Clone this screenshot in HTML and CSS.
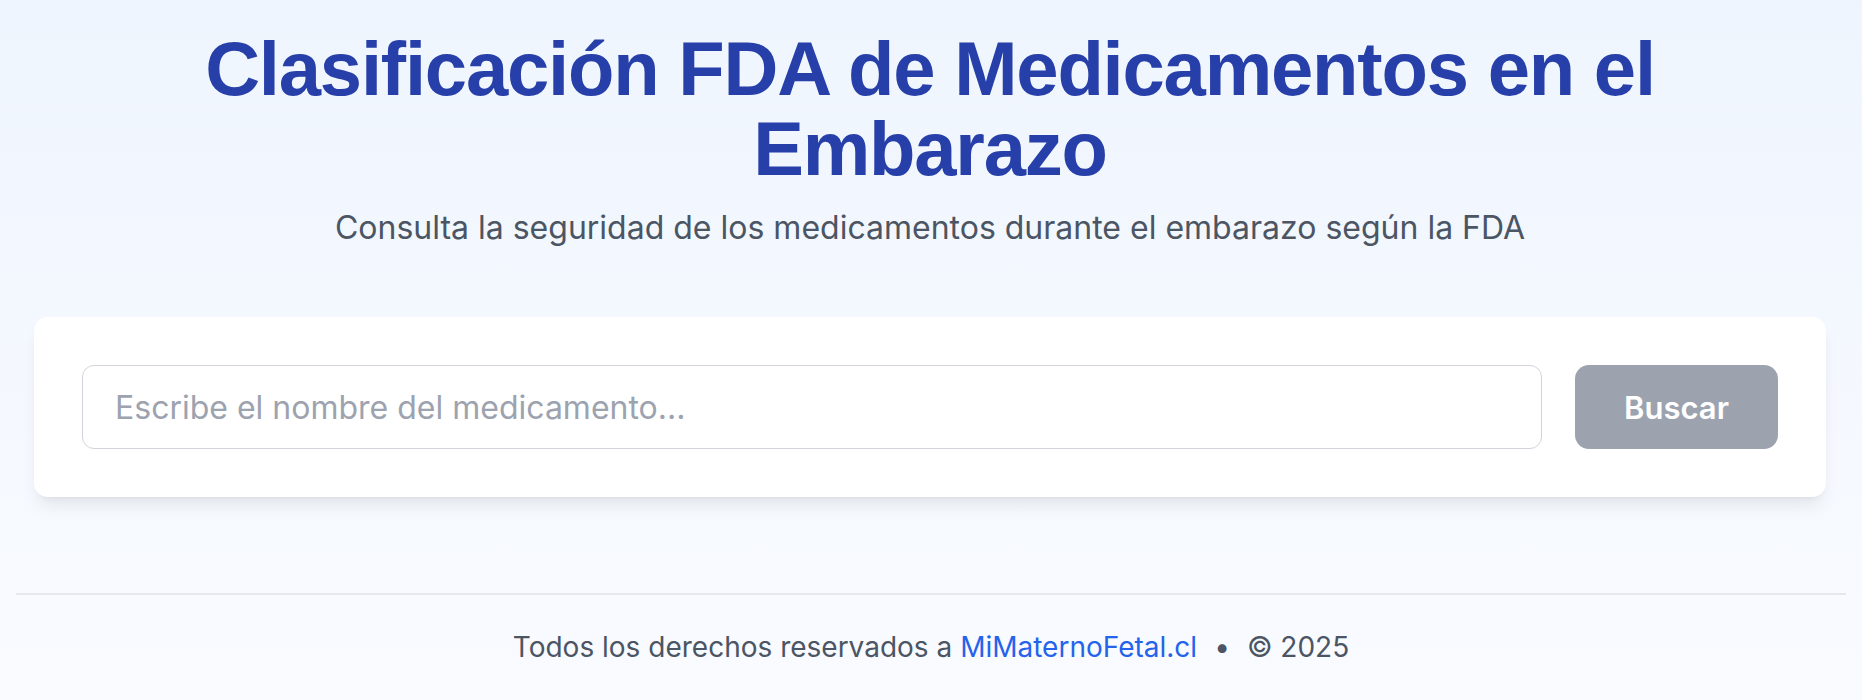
FILE: index.html
```html
<!DOCTYPE html>
<html lang="es">
<head>
<meta charset="utf-8">
<title>Clasificación FDA de Medicamentos en el Embarazo</title>
<link rel="stylesheet" href="styles.css">
</head>
<body>
<main class="container">
  <header class="hero">
    <h1 class="title">Clasificación FDA de Medicamentos en el Embarazo</h1>
    <p class="subtitle">Consulta la seguridad de los medicamentos durante el embarazo según la FDA</p>
  </header>
  <section class="card">
    <form class="search">
      <input class="search-input" type="text" placeholder="Escribe el nombre del medicamento...">
      <button class="search-btn" type="button" disabled>Buscar</button>
    </form>
  </section>
</main>
<footer class="footer">
  <p class="footer-text">Todos los derechos reservados a <a class="footer-link" href="#">MiMaternoFetal.cl</a><span class="dot">•</span>© 2025</p>
</footer>
</body>
</html>
```

FILE: styles.css
```css
html, body {
  margin: 0;
  padding: 0;
}
body {
  min-height: 700px;
  background: linear-gradient(to bottom, #eff5fe 0%, #f9fbff 100%);
  font-family: "Inter", "Noto Sans", sans-serif;
  color: #4b5563;
}
.container {
  padding: 29px 36px 0 34px;
}
.hero {
  text-align: center;
}
.title {
  margin: 0;
  font-family: "Liberation Sans", Arial, sans-serif;
  font-weight: 700;
  font-size: 76px;
  line-height: 80px;
  letter-spacing: -1.2px;
  color: #2740a9;
  padding: 0 100px;
}
.subtitle {
  margin: 15px 0 0;
  font-size: 32px;
  line-height: 48px;
  color: #4b5563;
}
.card {
  margin-top: 65px;
  background: #ffffff;
  border-radius: 14px;
  padding: 48px;
  box-shadow: 0 12px 18px -4px rgba(0, 0, 0, 0.08), 0 5px 7px -5px rgba(0, 0, 0, 0.08);
}
.search {
  display: flex;
  gap: 33px;
  margin: 0;
}
.search-input {
  flex: 1;
  height: 84px;
  box-sizing: border-box;
  border: 1.5px solid #d1d5db;
  border-radius: 12px;
  padding: 0 32px;
  font-family: "Inter", sans-serif;
  font-size: 32px;
  color: #111827;
  background: #fff;
  outline: none;
}
.search-input::placeholder {
  color: #9ca3af;
}
.search-btn {
  width: 203px;
  height: 84px;
  border: none;
  border-radius: 14px;
  background: #9ca3af;
  color: #ffffff;
  font-family: "Inter", sans-serif;
  font-weight: 600;
  font-size: 31px;
}
.footer {
  margin: 96px 16px 0;
  border-top: 2px solid #e5e7eb;
  padding-top: 32px;
  text-align: center;
}
.footer-text {
  margin: 0;
  font-size: 28px;
  line-height: 40px;
  color: #4b5563;
}
.footer-link {
  color: #2563eb;
  text-decoration: none;
}
.dot {
  margin: 0 17px;
}
```
